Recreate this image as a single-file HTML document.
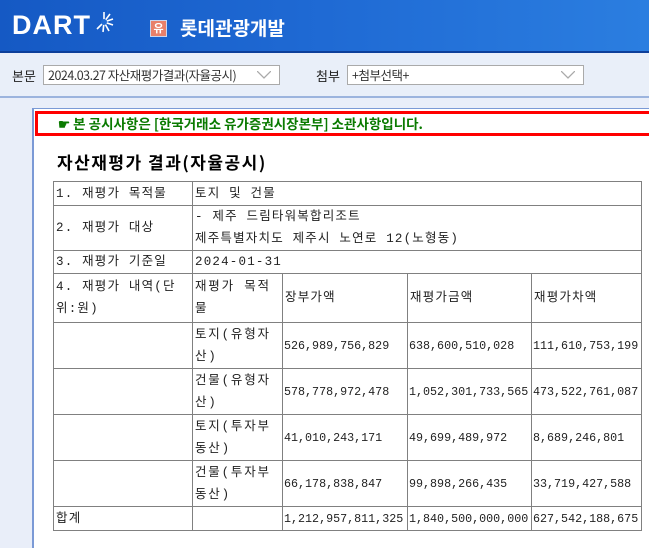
<!DOCTYPE html>
<html><head><meta charset="utf-8"><style>
*{margin:0;padding:0;box-sizing:border-box}
body{width:649px;height:530px;overflow:hidden;background:#e9eef9;font-family:"Liberation Sans","Noto Sans CJK KR",sans-serif;position:relative}
#hd{position:absolute;left:0;top:0;width:649px;height:53px;background:linear-gradient(90deg,#1559c4,#1f6ad4 50%,#2b7ee0);border-bottom:2px solid #0d3f9a}
#logo{position:absolute;left:12px;top:10px;color:#fff;font:bold 27px "Liberation Sans",sans-serif;letter-spacing:1px}
#badge{position:absolute;left:150px;top:20px;width:17px;height:17px;background:#e8806a;border:1px solid #c9d6ef;color:#fff;font:bold 11px "Noto Sans CJK KR",sans-serif;text-align:center;line-height:15px}
#ttl{position:absolute;left:180px;top:16px;color:#fff;font:bold 19px "Noto Sans CJK KR",sans-serif;line-height:24px}
#tb{position:absolute;left:0;top:55px;width:649px;height:43px;background:#e9eff9;border-bottom:2px solid #9cb4de}
.lbl{position:absolute;top:11px;font:13px "Noto Sans CJK KR",sans-serif;color:#222}
.sel{position:absolute;top:10px;height:20px;background:#fff;border:1px solid #aaa;font:12.5px "Noto Sans CJK KR",sans-serif;color:#333;padding-left:4px;line-height:18px;letter-spacing:-0.5px}
.sel svg{position:absolute;right:8px;top:5px}
#doc{position:absolute;left:32px;top:108px;width:640px;height:440px;background:#fff;border-left:2px solid #7b9ad6;border-top:1px solid #7b9ad6}
#red{position:absolute;left:1px;top:2px;width:640px;height:25px;border:3px solid #f00;color:#0a7a00;font:bold 13.5px "Noto Sans CJK KR",sans-serif;line-height:19px;padding-left:20px}
#h1{position:absolute;left:23px;top:40px;font:bold 17px "Noto Sans CJK KR",sans-serif;color:#000;letter-spacing:1.5px}
table{position:absolute;left:19px;top:72px;width:588px;border-collapse:collapse;font:12.5px "Liberation Mono","Noto Sans CJK KR",monospace;color:#222;table-layout:fixed}
td{border:1px solid #808080;padding:0 2px;vertical-align:middle;line-height:22px;letter-spacing:1.2px;white-space:nowrap;overflow:hidden}
td.w{white-space:normal;letter-spacing:1.8px}
.n{letter-spacing:0;font-size:11.7px;padding:0 1px}
</style></head><body>
<div id="hd">
<div id="logo">DART</div>
<svg style="position:absolute;left:94px;top:10px" width="20" height="24" viewBox="0 0 20 24"><g stroke="#fff" stroke-width="1.6"><line x1="10" y1="12" x2="10" y2="2"/><line x1="10" y1="12" x2="16" y2="4"/><line x1="10" y1="12" x2="19" y2="9"/><line x1="10" y1="12" x2="19" y2="15"/><line x1="10" y1="12" x2="15" y2="21"/><line x1="10" y1="12" x2="9" y2="22"/><line x1="10" y1="12" x2="3" y2="19"/></g><circle cx="10" cy="12" r="3" fill="#1f6ad4"/></svg>
<div id="badge">유</div>
<div id="ttl">롯데관광개발</div>
</div>
<div id="tb">
<div class="lbl" style="left:12px">본문</div>
<div class="sel" style="left:43px;width:237px">2024.03.27 자산재평가결과(자율공시)<svg width="14" height="8"><path d="M0 0L7 7L14 0" fill="none" stroke="#aaa" stroke-width="1.3"/></svg></div>
<div class="lbl" style="left:316px">첨부</div>
<div class="sel" style="left:347px;width:237px">+첨부선택+<svg width="14" height="8"><path d="M0 0L7 7L14 0" fill="none" stroke="#aaa" stroke-width="1.3"/></svg></div>
</div>
<div id="doc">
<div id="red">☛ 본 공시사항은 [한국거래소 유가증권시장본부] 소관사항입니다.</div>
<div id="h1">자산재평가 결과(자율공시)</div>
<table>
<colgroup><col style="width:139px"><col style="width:90px"><col style="width:125px"><col style="width:124px"><col style="width:110px"></colgroup>
<tr style="height:24px"><td>1. 재평가 목적물</td><td colspan="4">토지 및 건물</td></tr>
<tr style="height:45px"><td>2. 재평가 대상</td><td colspan="4">- 제주 드림타워복합리조트<br>제주특별자치도 제주시 노연로 12(노형동)</td></tr>
<tr style="height:23px"><td>3. 재평가 기준일</td><td colspan="4">2024-01-31</td></tr>
<tr style="height:49px"><td class="w" style="letter-spacing:1.2px">4. 재평가 내역(단위:원)</td><td class="w">재평가 목적물</td><td>장부가액</td><td>재평가금액</td><td>재평가차액</td></tr>
<tr style="height:46px"><td></td><td class="w">토지(유형자산)</td><td class="n">526,989,756,829</td><td class="n">638,600,510,028</td><td class="n">111,610,753,199</td></tr>
<tr style="height:46px"><td></td><td class="w">건물(유형자산)</td><td class="n">578,778,972,478</td><td class="n">1,052,301,733,565</td><td class="n">473,522,761,087</td></tr>
<tr style="height:46px"><td></td><td class="w">토지(투자부동산)</td><td class="n">41,010,243,171</td><td class="n">49,699,489,972</td><td class="n">8,689,246,801</td></tr>
<tr style="height:46px"><td></td><td class="w">건물(투자부동산)</td><td class="n">66,178,838,847</td><td class="n">99,898,266,435</td><td class="n">33,719,427,588</td></tr>
<tr style="height:24px"><td>합계</td><td></td><td class="n">1,212,957,811,325</td><td class="n">1,840,500,000,000</td><td class="n">627,542,188,675</td></tr>
</table>
</div>
</body></html>
